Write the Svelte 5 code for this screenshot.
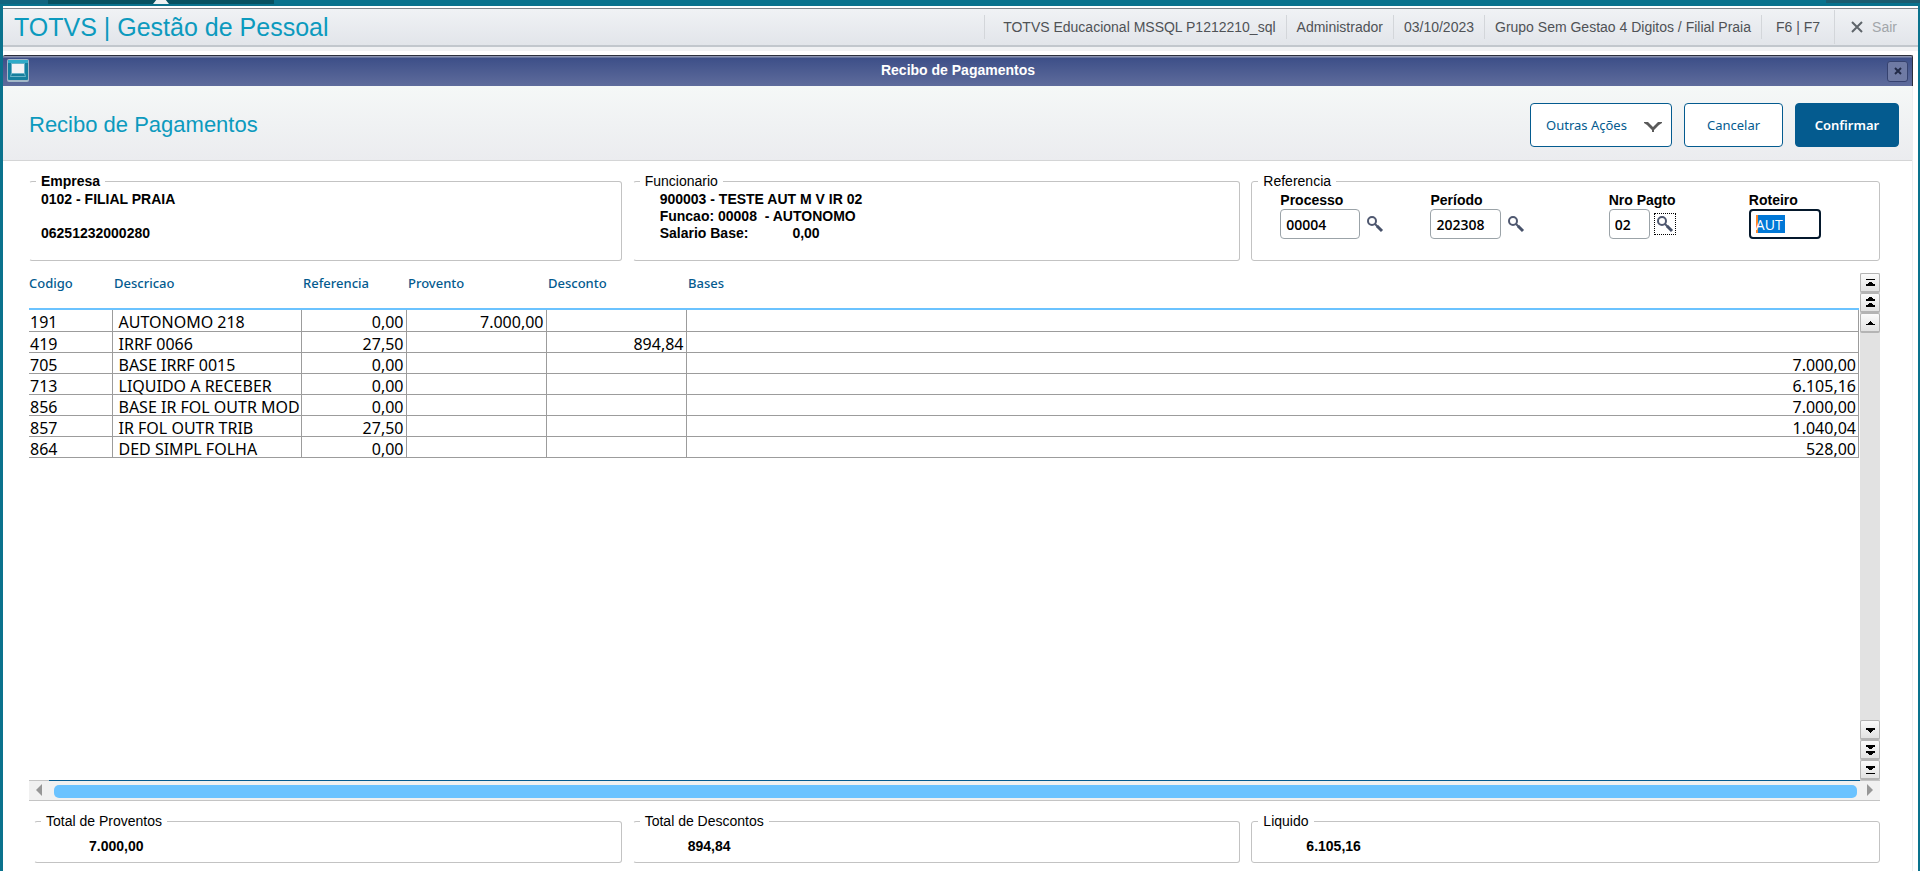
<script>
  let processo = '00004';
  let periodo = '202308';
  let nroPagto = '02';
  let roteiro = 'AUT';

  const session = [
    'TOTVS Educacional MSSQL P1212210_sql',
    'Administrador',
    '03/10/2023',
    'Grupo Sem Gestao 4 Digitos / Filial Praia',
    'F6 | F7'
  ];

  const rows = [
    { codigo: '191', descricao: 'AUTONOMO 218', referencia: '0,00', provento: '7.000,00', desconto: '', bases: '' },
    { codigo: '419', descricao: 'IRRF 0066', referencia: '27,50', provento: '', desconto: '894,84', bases: '' },
    { codigo: '705', descricao: 'BASE IRRF 0015', referencia: '0,00', provento: '', desconto: '', bases: '7.000,00' },
    { codigo: '713', descricao: 'LIQUIDO A RECEBER', referencia: '0,00', provento: '', desconto: '', bases: '6.105,16' },
    { codigo: '856', descricao: 'BASE IR FOL OUTR MOD', referencia: '0,00', provento: '', desconto: '', bases: '7.000,00' },
    { codigo: '857', descricao: 'IR FOL OUTR TRIB', referencia: '27,50', provento: '', desconto: '', bases: '1.040,04' },
    { codigo: '864', descricao: 'DED SIMPL FOLHA', referencia: '0,00', provento: '', desconto: '', bases: '528,00' }
  ];

  const totals = [
    { label: 'Total de Proventos', value: '7.000,00' },
    { label: 'Total de Descontos', value: '894,84' },
    { label: 'Liquido', value: '6.105,16' }
  ];

  const scrollUp = [
    { label: 'Primeiro registro', d: 'M5 5h9v1H5zM8 8h3v1h1v1h2v2H5v-2h2V9h1z' },
    { label: 'Pagina anterior', d: 'M8 3h3v1h1v1h2v2H5V5h2V4h1zM8 9h3v1h1v1h2v2H5v-2h2v-1h1z' },
    { label: 'Registro anterior', d: 'M9 7h1v1h1v1h1v1h2v1H5v-1h2V9h1V8h1z' }
  ];
  const scrollDown = [
    { label: 'Proximo registro', d: 'M5 7h9v2h-2v1h-1v1h-1v1H9v-1H8v-1H7V9H5z' },
    { label: 'Proxima pagina', d: 'M5 4h9v2h-2v1h-1v1H8V7H7V6H5zM5 10h9v2h-2v1h-1v1H8v-1H7v-1H5z' },
    { label: 'Ultimo registro', d: 'M5 5h9v2h-2v1h-1v1H8V8H7V7H5zM5 12h9v1H5z' }
  ];
</script>

{#snippet lookup(label, focused)}
  <button class="lookup" class:focused aria-label={label}>
    <svg width="18" height="18" viewBox="0 0 18 18">
      <circle cx="6" cy="6" r="4" fill="none" stroke="#4f5870" stroke-width="2" />
      <path d="M9 9l3 3" stroke="#4f5870" stroke-width="2" />
      <path d="M11 11l5 5" stroke="#47526a" stroke-width="3" />
    </svg>
  </button>
{/snippet}

<div class="desktop">
  <div class="tabstrip">
    <span class="tab"></span>
    <span class="tab active"><i></i></span>
    <span class="controls"></span>
  </div>

  <div class="app">
    <header class="topbar">
      <h1>TOTVS | Gestão de Pessoal</h1>
      <ul>
        {#each session as item}
          <li>{item}</li>
        {/each}
        <li>
          <button class="exit">
            <svg width="12" height="12" viewBox="0 0 12 12"><path d="M1 1l10 10M11 1L1 11" stroke="#5f656b" stroke-width="2" /></svg>
            Sair
          </button>
        </li>
      </ul>
    </header>

    <main class="window">
      <div class="titlebar">
        <svg width="22" height="24" viewBox="0 0 22 24">
          <rect x="0" y="0" width="22" height="23" rx="2" fill="#a3b8c8" />
          <rect x="1" y="1" width="20" height="20" rx="1" fill="#14809f" />
          <rect x="1" y="1" width="20" height="3" fill="#2fabc8" />
          <path d="M4 4h14v10l1 4H3l1-4z" fill="#69b3c8" />
          <rect x="5" y="5" width="12" height="9" fill="#f3f3f5" />
          <path d="M5 15h12l1 2H4z" fill="#177f9c" />
        </svg>
        <h2>Recibo de Pagamentos</h2>
        <button class="close" aria-label="Fechar">
          <svg width="8" height="8" viewBox="0 0 8 8"><path d="M1 1l6 6M7 1L1 7" stroke="#222a48" stroke-width="2" /></svg>
        </button>
      </div>

      <div class="page-head">
        <h3>Recibo de Pagamentos</h3>
        <div class="actions">
          <button class="menu">
            Outras Ações
            <svg width="18" height="12" viewBox="0 0 18 12"><path d="M0 1h4l5 5 5-5h4v1l-3 2-5 5v2H8V9L3 4 0 2z" fill="#5a5a5a" /></svg>
          </button>
          <button>Cancelar</button>
          <button class="primary">Confirmar</button>
        </div>
      </div>

      <div class="content">
        <div class="panels">
          <fieldset>
            <legend class="strong">Empresa</legend>
            <p>0102 - FILIAL PRAIA</p>
            <p>&nbsp;</p>
            <p>06251232000280</p>
          </fieldset>
          <fieldset class="employee">
            <legend>Funcionario</legend>
            <p>900003 - TESTE AUT M V IR 02</p>
            <p>Funcao: 00008&nbsp; - AUTONOMO</p>
            <p class="salary"><span>Salario Base:</span><span>0,00</span></p>
          </fieldset>
          <fieldset>
            <legend>Referencia</legend>
            <div class="fields">
              <div class="field">
                <label for="processo">Processo</label>
                <div><input id="processo" class="w-processo" bind:value={processo} />{@render lookup('Consultar processo', false)}</div>
              </div>
              <div class="field">
                <label for="periodo">Período</label>
                <div><input id="periodo" class="w-periodo" bind:value={periodo} />{@render lookup('Consultar periodo', false)}</div>
              </div>
              <div class="field">
                <label for="nro">Nro Pagto</label>
                <div><input id="nro" class="w-nro" bind:value={nroPagto} />{@render lookup('Consultar pagamento', true)}</div>
              </div>
              <div class="field">
                <label for="roteiro">Roteiro</label>
                <div><input id="roteiro" class="w-roteiro" bind:value={roteiro} /></div>
              </div>
            </div>
          </fieldset>
        </div>

        <div class="grid">
          <div class="grid-body">
            <table>
              <colgroup>
                <col class="c-codigo" /><col class="c-descricao" /><col class="c-referencia" />
                <col class="c-valor" /><col class="c-valor" /><col />
              </colgroup>
              <thead>
                <tr><th>Codigo</th><th>Descricao</th><th>Referencia</th><th>Provento</th><th>Desconto</th><th>Bases</th></tr>
              </thead>
              <tbody>
                {#each rows as row}
                  <tr>
                    <td>{row.codigo}</td>
                    <td class="desc">{row.descricao}</td>
                    <td class="num">{row.referencia}</td>
                    <td class="num">{row.provento}</td>
                    <td class="num">{row.desconto}</td>
                    <td class="num">{row.bases}</td>
                  </tr>
                {/each}
              </tbody>
            </table>
          </div>
          <div class="vscroll">
            {#each scrollUp as b}
              <button aria-label={b.label}><svg width="18" height="17" viewBox="0 0 18 17"><path d={b.d} /></svg></button>
            {/each}
            <span></span>
            {#each scrollDown as b}
              <button aria-label={b.label}><svg width="18" height="17" viewBox="0 0 18 17"><path d={b.d} /></svg></button>
            {/each}
          </div>
        </div>
        <div class="hscroll">
          <button aria-label="Rolar para a esquerda"><svg width="8" height="12" viewBox="0 0 8 12"><path d="M7 0v12L1 6z" /></svg></button>
          <div class="track"><div class="thumb"></div></div>
          <button aria-label="Rolar para a direita"><svg width="8" height="12" viewBox="0 0 8 12"><path d="M1 0v12l6-6z" /></svg></button>
        </div>

        <div class="panels totals">
          {#each totals as total}
            <fieldset>
              <legend>{total.label}</legend>
              <p>{total.value}</p>
            </fieldset>
          {/each}
        </div>
      </div>
    </main>
  </div>
</div>

<style>
  :global(body) {
    background: #fff;
    font-family: 'Liberation Sans', Arial, sans-serif;
    font-size: 14px;
    color: #000;
  }
  * {
    box-sizing: border-box;
  }
  h1, h2, h3, p, ul {
    margin: 0;
    padding: 0;
  }
  button {
    font-family: inherit;
    font-size: inherit;
    padding: 0;
    cursor: pointer;
  }

  .desktop {
    display: flex;
    flex-direction: column;
    min-height: 100vh;
    background: #0a728d;
  }
  .tabstrip {
    display: flex;
    height: 6px;
    padding-bottom: 2px;
  }
  .tab {
    width: 48px;
    background: #126580;
  }
  .tab.active {
    width: 226px;
    background: #075161;
    display: flex;
    justify-content: center;
  }
  .tab.active i {
    width: 16px;
    background: #eef1f2;
    clip-path: polygon(20% 0, 80% 0, 100% 100%, 0 100%);
  }
  .controls {
    width: 94px;
    height: 3px;
    margin-left: auto;
    background: #1c5c70;
  }
  .app {
    flex: 1;
    display: flex;
    flex-direction: column;
    margin: 0 2px 0 3px;
    background: #fff;
    border-top: 2px solid #fff;
  }

  .topbar {
    display: flex;
    align-items: center;
    justify-content: space-between;
    height: 39px;
    padding-left: 11px;
    border-top: 1px solid #83868c;
    border-bottom: 2px solid #c2c7cd;
    background: linear-gradient(#f0f2f5, #e2e5ea);
    box-shadow: 0 4px 0 #f1f2f4;
  }
  h1 {
    font-size: 25px;
    font-weight: normal;
    line-height: 32px;
    color: #0c9abe;
  }
  .topbar ul {
    display: flex;
    align-items: center;
    list-style: none;
    color: #4f5256;
  }
  .topbar li {
    padding: 0 10px;
    line-height: 24px;
    border-left: 1px solid #d3d6da;
  }
  .topbar li:first-child {
    padding-left: 18px;
  }
  .topbar li:nth-child(5) {
    padding: 0 14px;
  }
  .topbar li:last-child {
    padding: 5px 21px 5px 16px;
  }
  .exit {
    display: flex;
    align-items: center;
    gap: 9px;
    height: 24px;
    border: none;
    background: none;
    color: #a2a6aa;
  }

  .window {
    flex: 1;
    display: flex;
    flex-direction: column;
    margin: 8px 5px 0 0;
    border-right: 1px solid #eceef0;
  }
  .titlebar {
    display: flex;
    align-items: center;
    height: 31px;
    margin-right: -1px;
    padding: 0 4px;
    border-top: 1px solid #2c2f3c;
    border-right: 1px solid #2c2f3c;
    border-radius: 2px 2px 0 0;
    background: linear-gradient(#8b93b0 0 1px, #3d4f88 2px, #5f6c9c);
  }
  h2 {
    flex: 1;
    padding-bottom: 2px;
    text-align: center;
    font-size: 14px;
    color: #fff;
  }
  .close {
    display: flex;
    align-items: center;
    justify-content: center;
    width: 21px;
    height: 21px;
    border: 1px solid #36426f;
    border-radius: 3px;
    background: #6f7aa4;
  }
  .page-head {
    display: flex;
    align-items: center;
    justify-content: space-between;
    height: 75px;
    padding: 3px 13px 0 26px;
    border-bottom: 1px solid #d4d5d6;
    background: linear-gradient(#f5f8f7, #ebecef);
  }
  h3 {
    font-size: 22px;
    font-weight: normal;
    color: #0c9abe;
  }
  .actions {
    display: flex;
    gap: 12px;
    font-family: 'Noto Sans', 'Open Sans', sans-serif;
    font-size: 13px;
  }
  .actions button {
    display: flex;
    align-items: center;
    justify-content: center;
    gap: 17px;
    min-width: 99px;
    height: 44px;
    border: 1px solid #045b8f;
    border-radius: 4px;
    background: #fff;
    color: #045b8f;
  }
  .actions .menu {
    min-width: 142px;
    padding-left: 6px;
  }
  .actions .menu svg {
    margin-top: 4px;
  }
  .actions .primary {
    min-width: 104px;
    background: #045b8f;
    color: #fff;
    font-weight: 600;
  }

  .content {
    flex: 1;
    display: flex;
    flex-direction: column;
    padding: 11px 32px 8px 26px;
  }
  .panels {
    display: grid;
    grid-template-columns: 593fr 608fr 629fr;
    gap: 11px;
  }
  fieldset {
    min-width: 0;
    margin: 0;
    height: 89px;
    padding: 1px 11px 0;
    border: 1px solid #c3c3c3;
    border-left-color: transparent;
    border-radius: 3px;
  }
  fieldset:last-child {
    border-left-color: #c3c3c3;
  }
  legend {
    margin-left: -5px;
    padding: 0 5px;
    line-height: 18px;
  }
  p,
  label,
  .strong {
    font-weight: bold;
  }
  p {
    line-height: 17px;
    white-space: nowrap;
  }
  .employee p {
    padding-left: 15px;
  }
  .salary {
    display: flex;
    gap: 44px;
  }
  .fields {
    display: grid;
    grid-template-columns: 150fr 178fr 140fr 119fr;
    padding-left: 17px;
  }
  .field label {
    display: block;
    line-height: 18px;
  }
  .field div {
    display: flex;
    align-items: center;
    gap: 4px;
  }
  input {
    height: 30px;
    padding: 0 5px;
    border: 1px solid #9ba3a8;
    border-radius: 4px;
    background: #fff;
    font: 600 14px 'Open Sans', sans-serif;
  }
  .w-processo {
    width: 80px;
  }
  .w-periodo {
    width: 71px;
  }
  .w-nro {
    width: 41px;
  }
  /* focused field with its whole value selected */
  .w-roteiro {
    width: 72px;
    border: 2px solid #04182c;
    font-weight: normal;
    color: #fff;
    background:
      linear-gradient(#ff8728, #ff8728) 5px 4px / 2px 18px no-repeat,
      linear-gradient(#0078d7, #0078d7) 5px 4px / 29px 18px no-repeat,
      #fff;
  }
  .lookup {
    display: flex;
    align-items: center;
    justify-content: center;
    width: 22px;
    height: 22px;
    border: 1px solid transparent;
    background: none;
  }
  .lookup.focused {
    border: 1px dotted #000;
  }

  .grid {
    flex: 1;
    display: flex;
    margin-top: 12px;
  }
  .grid-body {
    flex: 1;
    min-width: 0;
    padding-right: 1px;
  }
  table {
    width: 100%;
    table-layout: fixed;
    border-collapse: collapse;
    font-family: 'Noto Sans', 'Open Sans', sans-serif;
    font-size: 16px;
  }
  .c-codigo {
    width: 83px;
  }
  .c-descricao {
    width: 189px;
  }
  .c-referencia {
    width: 105px;
  }
  .c-valor {
    width: 140px;
  }
  th {
    height: 36px;
    padding: 0 0 16px 2px;
    text-align: left;
    font-size: 13px;
    font-weight: 500;
    line-height: 18px;
    color: #045b8f;
    border-bottom: 2px solid #6bc3ff;
  }
  th:first-child {
    padding-left: 0;
  }
  td {
    height: 21px;
    padding: 5px 2px 0 1px;
    line-height: 15px;
    white-space: nowrap;
    border-right: 1px solid #9c9c9c;
    border-bottom: 1px solid #9c9c9c;
  }
  tbody tr:first-child td {
    height: 22px;
  }
  td.desc {
    padding-left: 6px;
  }
  td.num {
    text-align: right;
  }
  .vscroll {
    display: flex;
    flex-direction: column;
    width: 20px;
    background: #e2e2e2;
  }
  .vscroll span {
    flex: 1;
  }
  .vscroll button {
    display: flex;
    height: 20px;
    border: 1px solid #b4b4b4;
    border-bottom-width: 2px;
    border-radius: 2px;
    background: linear-gradient(#fbfbfb, #e2e2e2);
  }
  .hscroll {
    display: flex;
    align-items: center;
    height: 21px;
    background: #f1f1f1;
    border-bottom: 1px solid #c4c4c4;
  }
  .hscroll button {
    width: 20px;
    height: 20px;
    border: none;
    border-top: 1px solid #c4c4c4;
    background: none;
    fill: #979797;
  }
  .track {
    flex: 1;
    height: 20px;
    padding: 4px 3px 0 5px;
    border-top: 1px solid #045b8f;
  }
  .thumb {
    height: 13px;
    border-radius: 5px;
    background: #6bc3ff;
  }
  .totals {
    margin-top: 11px;
    padding-left: 5px;
    grid-template-columns: 588fr 608fr 629fr;
  }
  .totals fieldset {
    height: 51px;
    padding-top: 8px;
    padding-left: 54px;
  }
  .totals legend {
    margin-left: -48px;
  }
</style>
